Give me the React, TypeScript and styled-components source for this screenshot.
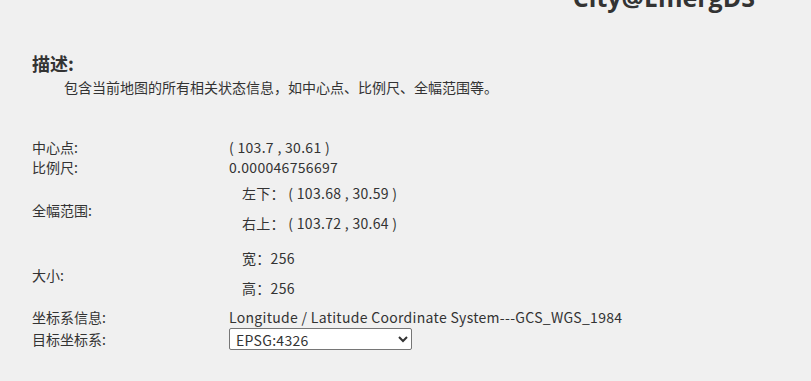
import React from "react"
import styled, { createGlobalStyle } from "styled-components"

const GlobalStyle = createGlobalStyle`
  html, body {
    margin: 0;
    padding: 0;
    background: #f0f0f0;
  }
  body {
    font-family: "Noto Sans CJK SC", "Noto Sans", sans-serif;
    color: #333;
    overflow: hidden;
  }
`

const Page = styled.div`
  width: 811px;
  height: 381px;
  overflow: hidden;
`

const Header = styled.header`
  display: flex;
  justify-content: flex-end;
  padding-right: 56px;
  margin-top: -18px;
`

const Brand = styled.h1`
  margin: 0;
  font-family: "Open Sans", "Noto Sans", sans-serif;
  font-size: 25px;
  font-weight: 700;
  line-height: 30px;
  color: #333;
`

const Content = styled.main`
  padding: 39px 0 0 32px;
`

const Title = styled.h2`
  margin: 0;
  font-size: 18px;
  font-weight: 700;
  line-height: 24px;
`

const Description = styled.p`
  margin: 0;
  padding-left: 32px;
  font-size: 14px;
  line-height: 24px;
`

const InfoGrid = styled.div`
  display: grid;
  grid-template-columns: 197px auto;
  align-items: center;
  margin-top: 38px;
  font-size: 14px;
`

const Label = styled.div`
  line-height: 20px;
`

const Value = styled.div`
  line-height: 20px;
  letter-spacing: 0.3px;
`

const SubList = styled.div`
  display: flex;
  flex-direction: column;
  padding: 1px 0 4px 13px;
  letter-spacing: 0.3px;
`

const SubRow = styled.div`
  line-height: 30px;
`

const SelectRow = styled.div`
  padding: 1px 0;
`

const Select = styled.select`
  width: 183px;
  height: 22px;
  border: 1px solid #767676;
  border-radius: 2px;
  background: #fff;
  color: #333;
  font-family: "Noto Sans CJK SC", "Noto Sans", sans-serif;
  font-size: 14px;
  letter-spacing: 0.3px;
  padding: 0 2px;
`

const App = (): JSX.Element => {
  return (
    <Page>
      <GlobalStyle />
      <Header>
        <Brand>City@EmergDS</Brand>
      </Header>
      <Content>
        <Title>描述:</Title>
        <Description>包含当前地图的所有相关状态信息，如中心点、比例尺、全幅范围等。</Description>
        <InfoGrid>
          <Label>中心点:</Label>
          <Value>( 103.7 , 30.61 )</Value>
          <Label>比例尺:</Label>
          <Value>0.000046756697</Value>
          <Label>全幅范围:</Label>
          <SubList>
            <SubRow>左下： ( 103.68 , 30.59 )</SubRow>
            <SubRow>右上： ( 103.72 , 30.64 )</SubRow>
          </SubList>
          <Label>大小:</Label>
          <SubList>
            <SubRow>宽：256</SubRow>
            <SubRow>高：256</SubRow>
          </SubList>
          <Label>坐标系信息:</Label>
          <Value>Longitude / Latitude Coordinate System---GCS_WGS_1984</Value>
          <Label>目标坐标系:</Label>
          <SelectRow>
            <Select defaultValue="EPSG:4326">
              <option value="EPSG:4326">EPSG:4326</option>
              <option value="EPSG:3857">EPSG:3857</option>
            </Select>
          </SelectRow>
        </InfoGrid>
      </Content>
    </Page>
  )
}

export default App
